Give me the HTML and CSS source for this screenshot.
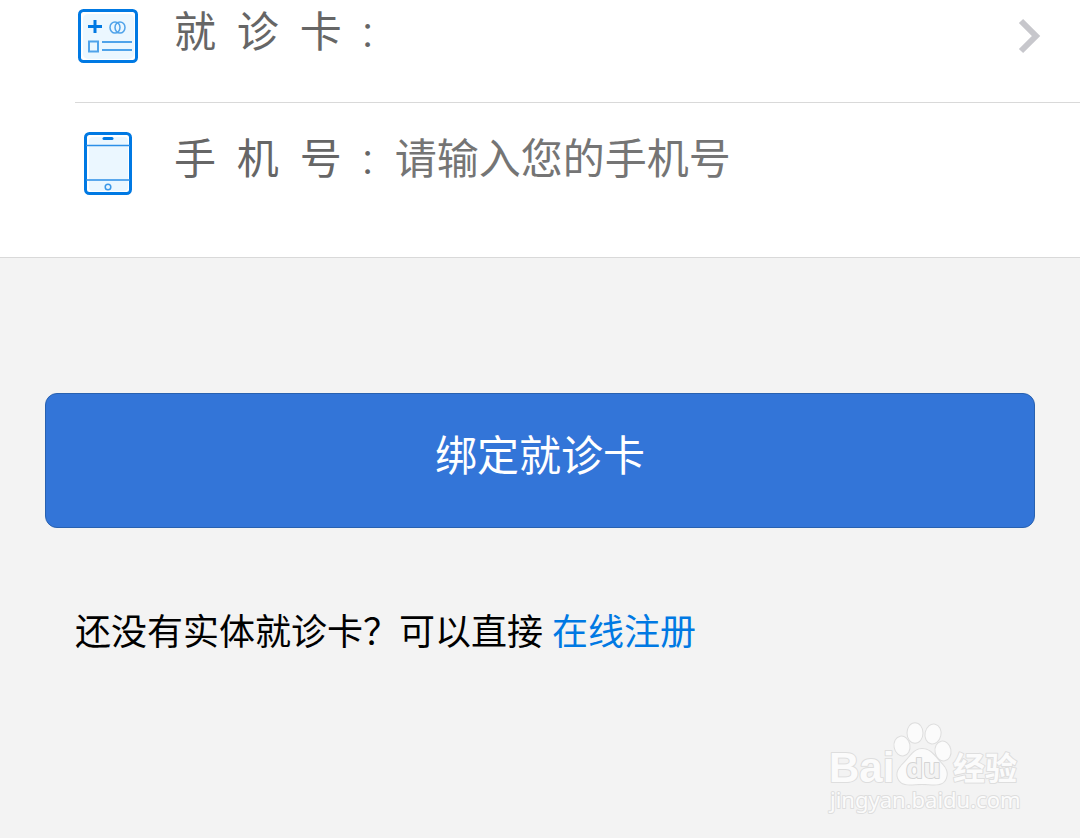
FILE: index.html
```html
<!DOCTYPE html>
<html lang="zh-CN">

<head>
    <meta charset="utf-8">
    <meta name="viewport" content="width=device-width, initial-scale=1.0">
    <title>绑定就诊卡</title>
    <link rel="stylesheet" href="styles.css">
</head>

<body>
    <form>
        <div class="panel">
            <a class="row card-row" href="#cards">
                <svg class="icon" viewBox="0 0 66 66" fill="none" stroke="#0079e3">
                    <rect x="4.500" y="7.500" width="57" height="51" rx="4" fill="#fff" stroke-width="3" />
                    <rect x="8" y="11" width="51" height="45" rx="5" fill="#ebf7ff" stroke="none" />
                    <path d="M13 23.500h14M20 17v13" stroke-width="3" />
                    <g stroke="#4fa3ea" stroke-width="1.500">
                        <ellipse cx="40" cy="24.500" rx="5" ry="5.500" />
                        <ellipse cx="45" cy="24.500" rx="5" ry="5.500" />
                        <rect x="14" y="38.500" width="9" height="10" stroke-width="2" />
                        <path d="M27 39h30M27 47h30" stroke-width="2" />
                    </g>
                </svg>
                <span class="label">就&nbsp;&nbsp;诊&nbsp;&nbsp;卡&nbsp;&nbsp;:</span>
                <svg class="arrow" viewBox="0 0 24 36" fill="none" stroke="#c7c7cc" stroke-width="6">
                    <path d="M3 3l15 15L3 33" />
                </svg>
            </a>
            <div class="row phone-row">
                <svg class="icon" viewBox="0 0 66 66" fill="none" stroke="#0079e3">
                    <rect x="10.500" y="3.500" width="45" height="60" rx="4" fill="#fff" stroke-width="3" />
                    <rect x="14" y="7" width="39" height="54" rx="4" fill="#ebf7ff" stroke="none" />
                    <path d="M29 8.500h8" stroke-width="3" stroke-linecap="round" />
                    <path d="M11 15.500h44M11 50h44" stroke="#2b8fe8" stroke-width="1.500" />
                    <circle cx="33" cy="57" r="2.800" stroke="#3b98e8" stroke-width="1.500" />
                </svg>
                <label class="label" for="phone">手&nbsp;&nbsp;机&nbsp;&nbsp;号&nbsp;&nbsp;:</label>
                <input id="phone" type="tel" placeholder="请输入您的手机号">
            </div>
        </div>

        <div class="actions">
            <button class="bind-button" type="submit">绑定就诊卡</button>
            <p class="hint">还没有实体就诊卡？可以直接 <a href="#register">在线注册</a></p>
        </div>
    </form>

    <svg class="watermark" viewBox="0 0 200 100" role="img" aria-label="Baidu">
        <g class="mark">
            <text class="bai" x="4" y="64">Bai</text>
            <ellipse cx="77" cy="28" rx="7.500" ry="9.500" transform="rotate(-10 77 28)" />
            <ellipse cx="90" cy="15" rx="7.500" ry="9.800" />
            <ellipse cx="108" cy="16" rx="7.500" ry="9.500" transform="rotate(12 108 16)" />
            <ellipse cx="118" cy="33" rx="7.500" ry="9.500" transform="rotate(-10 118 33)" />
            <path d="M97 31c9 0 13 8 18 13c6 6 8 10 6 16c-3 9-13 6-24 6s-20 3-24-6c-2-6 1-10 7-16c5-5 9-13 17-13z" />
            <text class="du" x="81" y="60">du</text>
            <text class="jingyan" x="128" y="62">经验</text>
            <text class="url" x="5" y="90">jingyan.baidu.com</text>
        </g>
    </svg>
</body>

</html>
```
FILE: styles.css
```css
* {
    box-sizing: border-box;
}

body {
    position: relative;
    min-height: 100vh;
    margin: 0;
    background: #f3f3f3;
    color: #000;
    font-family: Roboto, "Noto Sans CJK SC", sans-serif;
}

a {
    color: #0079e3;
    text-decoration: none;
}

.panel {
    padding-left: 75px;
    background: #fff;
    border-bottom: 1px solid #d9d9d9;
}

.row {
    display: flex;
    align-items: center;
    color: #666;
    font-size: 42px;
    line-height: 66px;
}

.card-row {
    padding-right: 38px;
    padding-bottom: 30px;
    border-bottom: 1px solid #d9d9d9;
}

.phone-row {
    padding-top: 24px;
    padding-bottom: 58px;
}

.icon {
    flex: none;
    width: 66px;
    height: 66px;
    margin-right: 33px;
}

.label {
    flex: none;
    /* keep the row height at 72px, icon height plus this padding */
    padding-bottom: 6px;
}

.arrow {
    width: 24px;
    height: 36px;
    margin-left: auto;
}

input {
    flex: 1;
    min-width: 0;
    height: 66px;
    margin: 0 0 6px 22px;
    padding: 0;
    border: 0;
    outline: 0;
    background: none;
    color: #000;
    font: inherit;
}

input::placeholder {
    color: #757575;
}

.actions {
    padding: 135px 45px 0;
}

.bind-button {
    display: block;
    width: 100%;
    height: 135px;
    padding: 0 0 16px;
    border: 1px solid #2861b0;
    border-radius: 12px;
    background: #3375d8;
    color: #fff;
    font: inherit;
    font-size: 42px;
}

.hint {
    margin: 78px 30px 0;
    font-size: 36px;
    line-height: 54px;
}

.watermark {
    position: absolute;
    right: 55px;
    bottom: 20px;
    width: 200px;
    height: 100px;
}

.mark {
    fill: #fbfbfb;
    stroke: #dedede;
    stroke-width: 2px;
    stroke-linejoin: round;
    paint-order: stroke;
}

.bai {
    font: bold 42px "Liberation Sans", sans-serif;
}

.du {
    fill: #f3f3f3;
    stroke: #d4d4d4;
    font: bold 27px "Open Sans", sans-serif;
}

.jingyan {
    font: bold 32px "Noto Sans CJK SC", sans-serif;
}

.url {
    font: 22px "Noto Sans", sans-serif;
}
```
